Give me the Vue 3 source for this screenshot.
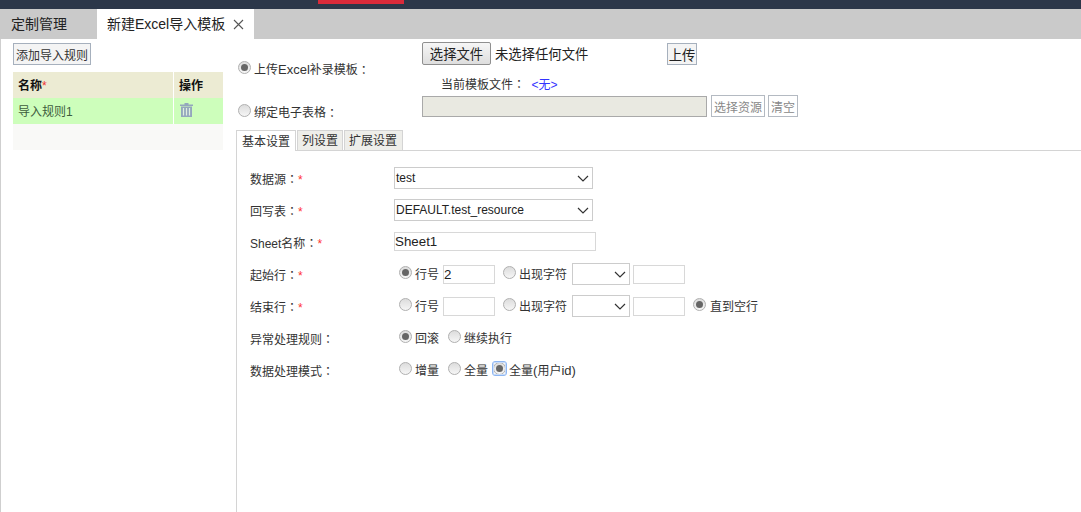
<script setup>
const rules = [{ name: '导入规则1' }]
const lineOptions = ['行号', '出现字符']
</script>

<template>
  <div class="page">
    <header class="topbar"><span class="topbar-red"></span></header>
    <nav class="tabbar">
      <span class="tab">定制管理</span>
      <span class="tab active">新建Excel导入模板
        <svg class="close" width="11" height="11" viewBox="0 0 11 11"><path d="M1 1L10 10M10 1L1 10" stroke="#555" stroke-width="1.1" fill="none"/></svg>
      </span>
    </nav>
    <main class="body">
      <aside class="left">
        <button class="btn add">添加导入规则</button>
        <div class="tbl">
          <div class="tr head"><div class="c1"><b>名称</b><i>*</i></div><div class="c2"><b>操作</b></div></div>
          <div v-for="r in rules" :key="r.name" class="tr sel">
            <div class="c1">{{ r.name }}</div>
            <div class="c2">
              <svg width="13" height="14" viewBox="0 0 13 14" class="trash">
                <path d="M0 1.5h13v1.5H0zM4.5 0h4v1.5h-4z" fill="#94a7bd"/>
                <path d="M1 3.5h11V14H1z" fill="#94a7bd"/>
                <path d="M3.5 5v7.5M6.5 5v7.5M9.5 5v7.5" stroke="#dfeee0" stroke-width="1.2"/>
              </svg>
            </div>
          </div>
          <div class="tr blank"></div>
        </div>
      </aside>
      <section class="right">
        <div class="source">
          <div class="src-labels">
            <label class="src-a"><span class="radio on"></span>上传<span class="lat">Excel</span>补录模板<span class="cl">：</span></label>
            <label class="src-b"><span class="radio"></span>绑定电子表格<span class="cl">：</span></label>
          </div>
          <div class="src-fields">
            <div class="file-row">
              <button class="file-btn">选择文件</button>
              <span class="file-text">未选择任何文件</span>
              <button class="btn upload">上传</button>
            </div>
            <div class="current">当前模板文件<span class="cl">：</span> <span class="none">&lt;无&gt;</span></div>
            <div class="res-row">
              <span class="res-input"></span>
              <button class="btn dim res-btn">选择资源</button>
              <button class="btn dim">清空</button>
            </div>
          </div>
        </div>
        <div class="tabs2">
          <span class="t2 on">基本设置</span><span class="t2">列设置</span><span class="t2 last">扩展设置</span>
        </div>
        <div class="form">
          <div class="row">
            <div class="lab">数据源<span class="cl">：</span><i>*</i></div>
            <div class="select wide"><span>test</span><svg class="chev" width="12" height="7" viewBox="0 0 12 7"><path d="M1 1l5 5 5-5" fill="none" stroke="#333" stroke-width="1.2"/></svg></div>
          </div>
          <div class="row">
            <div class="lab">回写表<span class="cl">：</span><i>*</i></div>
            <div class="select wide"><span>DEFAULT.test_resource</span><svg class="chev" width="12" height="7" viewBox="0 0 12 7"><path d="M1 1l5 5 5-5" fill="none" stroke="#333" stroke-width="1.2"/></svg></div>
          </div>
          <div class="row">
            <div class="lab">Sheet名称<span class="cl">：</span><i>*</i></div>
            <div class="input sheet">Sheet1</div>
          </div>
          <div class="row">
            <div class="lab">起始行<span class="cl">：</span><i>*</i></div>
            <div class="ctrl pad">
              <span class="radio on"></span><span class="rt">{{ lineOptions[0] }}</span>
              <span class="input num">2</span>
              <span class="radio r2"></span><span class="rt">{{ lineOptions[1] }}</span>
              <span class="select mini"><svg class="chev" width="12" height="7" viewBox="0 0 12 7"><path d="M1 1l5 5 5-5" fill="none" stroke="#333" stroke-width="1.2"/></svg></span>
              <span class="input num"></span>
            </div>
          </div>
          <div class="row">
            <div class="lab">结束行<span class="cl">：</span><i>*</i></div>
            <div class="ctrl pad">
              <span class="radio"></span><span class="rt">{{ lineOptions[0] }}</span>
              <span class="input num"></span>
              <span class="radio r2"></span><span class="rt">{{ lineOptions[1] }}</span>
              <span class="select mini"><svg class="chev" width="12" height="7" viewBox="0 0 12 7"><path d="M1 1l5 5 5-5" fill="none" stroke="#333" stroke-width="1.2"/></svg></span>
              <span class="input num"></span>
              <span class="radio r3 on"></span><span class="rt">直到空行</span>
            </div>
          </div>
          <div class="row">
            <div class="lab">异常处理规则<span class="cl">：</span></div>
            <div class="ctrl pad">
              <span class="radio on"></span><span class="rt">回滚</span>
              <span class="radio r4"></span><span class="rt">继续执行</span>
            </div>
          </div>
          <div class="row">
            <div class="lab">数据处理模式<span class="cl">：</span></div>
            <div class="ctrl pad">
              <span class="radio"></span><span class="rt">增量</span>
              <span class="radio r4"></span><span class="rt">全量</span>
              <span class="radio on focus"></span><span class="rt">全量<span class="lat">(</span>用户<span class="lat">id)</span></span>
            </div>
          </div>
        </div>
      </section>
    </main>
  </div>
</template>

<style>
html, body { margin: 0; background: #fff; overflow: hidden; }
</style>

<style scoped>
.page { width: 1081px; height: 512px; overflow: hidden; font: 12px "Liberation Sans", "Noto Sans CJK SC", sans-serif; color: #333; background: #fff; }
.cl { font-family: "Noto Sans CJK TC", sans-serif; }
.lat { font-size: 13px; }
.topbar { height: 9px; background: #2c3749; padding-left: 318px; }
.topbar-red { display: block; width: 86px; height: 4px; background: #d92a3a; }
.tabbar { height: 30px; background: #cacaca; display: flex; padding-left: 1px; }
.tab { width: 96px; padding-left: 10px; box-sizing: border-box; line-height: 30px; font-size: 14px; color: #222; }
.tab.active { width: 157px; background: #fff; display: flex; align-items: center; padding-left: 10px; white-space: nowrap; }
.close { margin-left: 8px; margin-top: 1px; flex: none; }
.body { display: flex; height: 473px; border-left: 1px solid #cfcfcf; box-sizing: border-box; }
.left { width: 236px; flex: none; padding: 4px 0 0 12px; box-sizing: border-box; }
.btn { font: inherit; color: #333; background: #f4f4f4; border: 1px solid #a6b0bd; padding: 0; height: 22px; box-sizing: border-box; display: block; }
.add { width: 78px; }
.tbl { margin-top: 7px; width: 210px; }
.tr { display: flex; height: 26px; line-height: 28px; }
.c1 { width: 161px; padding-left: 5px; box-sizing: border-box; border-right: 1px solid #fff; }
.c2 { flex: 1; padding-left: 5px; }
.head { background: #ecebd3; color: #111; }
.head i { color: #e33; font-style: normal; }
.sel { background: #cdfebb; color: #3d5c3d; }
.trash { display: block; margin: 5px 0 0 1px; }
.blank { background: #f9f9f7; }
.right { flex: 1; min-width: 0; }
.source { display: flex; height: 91px; }
.src-labels { width: 185px; flex: none; }
.src-labels label { display: flex; align-items: center; margin-left: 1px; color: #333; line-height: 16px; }
.src-labels .radio { margin-right: 3px; top: -3px; }
.src-a { margin-top: 23px; }
.src-b { margin-top: 27px; }
.src-fields { flex: 1; padding-top: 3px; }
.file-row { display: flex; align-items: center; height: 23px; }
.file-btn { width: 69px; height: 23px; font: 13.33px "Liberation Sans", "Noto Sans CJK SC", sans-serif; color: #222; border: 1px solid #8f8f8f; border-radius: 2px; background: linear-gradient(#f6f6f6, #dedede); padding: 0; }
.file-text { margin-left: 4px; width: 172px; font-size: 13.33px; color: #222; }
.upload { width: 30px; height: 22px; font-size: 13.33px; color: #222; align-self: flex-start; margin-top: 1px; }
.current { margin: 11px 0 0 19px; line-height: 16px; height: 16px; }
.none { color: #33f; margin-left: 3px; }
.res-row { display: flex; margin-top: 3px; height: 22px; align-items: flex-end; }
.res-input { width: 285px; height: 21px; box-sizing: border-box; background: #e9e9e1; border: 1px solid #a9a9a9; }
.dim { color: #888; background: #fff; height: 22px; width: 30px; font-size: 12px; border-color: #b4bac2; }
.res-btn { width: 54px; margin-left: 4px; margin-right: 3px; }
.tabs2 { display: flex; height: 20px; border-bottom: 1px solid #d4d4d4; align-items: flex-end; margin-left: -1px; }
.t2 { height: 20px; line-height: 20px; box-sizing: border-box; border: 1px solid #d4d4d4; border-bottom: 0; background: #eeeeea; padding: 0 4px; margin-right: 1px; color: #333; }
.t2.last { padding-right: 5px; }
.t2.on { height: 21px; margin-bottom: -1px; background: #fff; width: 60px; padding: 1px 0 0 5px; line-height: 20px; }
.form { border-left: 1px solid #d4d4d4; margin-left: -1px; height: 362px; padding: 11px 0 0 13px; box-sizing: border-box; }
.row { display: flex; align-items: center; height: 32px; }
.lab { width: 144px; flex: none; color: #333; line-height: 16px; padding-top: 2px; }
.lab i { color: #f33; font-style: normal; }
.select { display: flex; align-items: center; justify-content: space-between; box-sizing: border-box; border: 1px solid #ccc; background: #fff; color: #222; }
.wide { width: 199px; height: 22px; padding: 0 3px 0 1px; font-size: 12px; }
.input { display: inline-block; box-sizing: border-box; border: 1px solid #d8d8d8; background: #fff; color: #222; }
.sheet { width: 202px; height: 19px; line-height: 17px; font-size: 13.33px; position: relative; top: -1px; }
.ctrl { display: flex; align-items: center; }
.pad { padding-left: 5px; }
.rt { margin-left: 3px; white-space: nowrap; color: #333; line-height: 16px; padding-top: 2px; }
.radio { flex: none; display: inline-block; width: 13px; height: 13px; box-sizing: border-box; border-radius: 50%; border: 1px solid #b0b0b0; background: linear-gradient(#dcdcdc, #f6f6f6); position: relative; top: -2px; }
.radio.on::after { content: ""; position: absolute; left: 2px; top: 2px; width: 7px; height: 7px; border-radius: 50%; background: #666; }
.radio.focus { margin-left: 5px; }
.radio.focus::before { content: ""; position: absolute; left: -2px; top: -2px; width: 13px; height: 13px; border: 1px solid #8db6f2; border-radius: 3px; box-shadow: inset 0 0 0 1px #c9dcf8; }
.num { width: 52px; height: 19px; line-height: 17px; margin-left: 4px; padding-left: 0; font-size: 13.33px; }
.r2 { margin-left: 8px; }
.mini { width: 58px; height: 22px; margin-left: 5px; padding-right: 3px; justify-content: flex-end; }
.mini + .num { margin-left: 3px; }
.r3 { margin-left: 8px; }
.r3 + .rt { margin-left: 4px; }
.r4 { margin-left: 9px; }
</style>
